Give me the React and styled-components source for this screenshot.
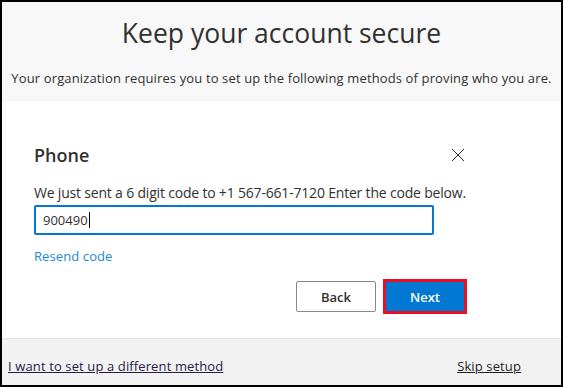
import styled, { createGlobalStyle } from "styled-components";

const GlobalStyle = createGlobalStyle`
  body {
    margin: 0;
    font-family: "Open Sans", "Noto Sans", sans-serif;
    color: #323130;
  }
`;

const Frame = styled.div`
  width: 563px;
  height: 387px;
  box-sizing: border-box;
  border: 2px solid #000;
  display: flex;
  flex-direction: column;
  background: #fff;
`;

const Header = styled.header`
  height: 99px;
  background: #f8f8f8;
  border-bottom: 1px solid #f0f0f0;
  display: flex;
  flex-direction: column;
  align-items: center;
  box-sizing: border-box;
  padding-top: 13px;
`;

const Title = styled.h1`
  margin: 0;
  font-size: 26.5px;
  font-weight: 400;
  line-height: 36px;
  color: #323130;
`;

const Subtitle = styled.p`
  margin: 18px 0 0;
  font-size: 13px;
  line-height: 18px;
  color: #323130;
  letter-spacing: 0.13px;
`;

const Main = styled.main`
  flex: 1;
  display: flex;
  flex-direction: column;
  padding: 40px 94px 0 32px;
`;

const HeadingRow = styled.div`
  display: flex;
  align-items: center;
  justify-content: space-between;
  height: 28px;
`;

const Heading = styled.h2`
  margin: 0;
  font-size: 18px;
  font-weight: 600;
  color: #323130;
`;

const CloseButton = styled.button`
  border: 0;
  background: none;
  padding: 0;
  width: 16px;
  height: 16px;
  margin-right: 1px;
  display: flex;
  align-items: center;
  justify-content: center;
  cursor: pointer;
`;

const Description = styled.p`
  margin: 15px 0 0;
  font-size: 14px;
  line-height: 18px;
  letter-spacing: -0.19px;
  color: #323130;
`;

const CodeInput = styled.div`
  margin-top: 3px;
  width: 400px;
  height: 30px;
  box-sizing: border-box;
  border: 2px solid #0078d4;
  border-radius: 2px;
  display: flex;
  align-items: center;
  padding-left: 7px;
  font-size: 13px;
  color: #323130;
`;

const Caret = styled.span`
  display: inline-block;
  width: 1px;
  height: 16px;
  background: #000;
  margin-left: 1px;
`;

const Link = styled.a`
  margin-top: 12px;
  font-size: 13px;
  line-height: 18px;
  letter-spacing: 0.1px;
  color: #1e88d8;
  text-decoration: none;
  align-self: flex-start;
`;

const Actions = styled.div`
  display: flex;
  justify-content: flex-end;
  align-items: center;
  gap: 7px;
  margin-top: 14px;
`;

const Button = styled.button`
  box-sizing: border-box;
  width: ${(p) => (p.$primary ? "84px" : "80px")};
  height: ${(p) => (p.$primary ? "35px" : "31px")};
  font-family: inherit;
  font-size: 13px;
  font-weight: 600;
  cursor: pointer;
  color: ${(p) => (p.$primary ? "#fff" : "#323130")};
  background: ${(p) => (p.$primary ? "#0078d4" : "#fff")};
  border: ${(p) => (p.$primary ? "3px solid #e81123" : "1px solid #8a8886")};
  border-radius: ${(p) => (p.$primary ? "0" : "2px")};
`;

const Footer = styled.footer`
  height: 47px;
  box-sizing: border-box;
  background: #f2f2f2;
  border-top: 1px solid #e6e6e6;
  display: flex;
  justify-content: space-between;
  align-items: flex-end;
  padding: 0 40px 10px 6px;
`;

const FooterLink = styled.a`
  font-size: 13px;
  line-height: 18px;
  letter-spacing: 0.12px;
  color: ${(p) => (p.$visited ? "#2a1a4a" : "#1f1f1f")};
  text-decoration: underline;
  cursor: pointer;
`;

export default function App() {
  return (
    <>
      <GlobalStyle />
      <Frame>
        <Header>
          <Title>Keep your account secure</Title>
          <Subtitle>
            Your organization requires you to set up the following methods of proving who you are.
          </Subtitle>
        </Header>
        <Main>
          <HeadingRow>
            <Heading>Phone</Heading>
            <CloseButton aria-label="Close">
              <svg width="14" height="14" viewBox="0 0 14 14">
                <path d="M1 1L13 13M13 1L1 13" stroke="#323130" strokeWidth="1" />
              </svg>
            </CloseButton>
          </HeadingRow>
          <Description>
            We just sent a 6 digit code to +1 567-661-7120 Enter the code below.
          </Description>
          <CodeInput>
            900490
            <Caret />
          </CodeInput>
          <Link href="#">Resend code</Link>
          <Actions>
            <Button>Back</Button>
            <Button $primary>Next</Button>
          </Actions>
        </Main>
        <Footer>
          <FooterLink $visited>I want to set up a different method</FooterLink>
          <FooterLink>Skip setup</FooterLink>
        </Footer>
      </Frame>
    </>
  );
}
